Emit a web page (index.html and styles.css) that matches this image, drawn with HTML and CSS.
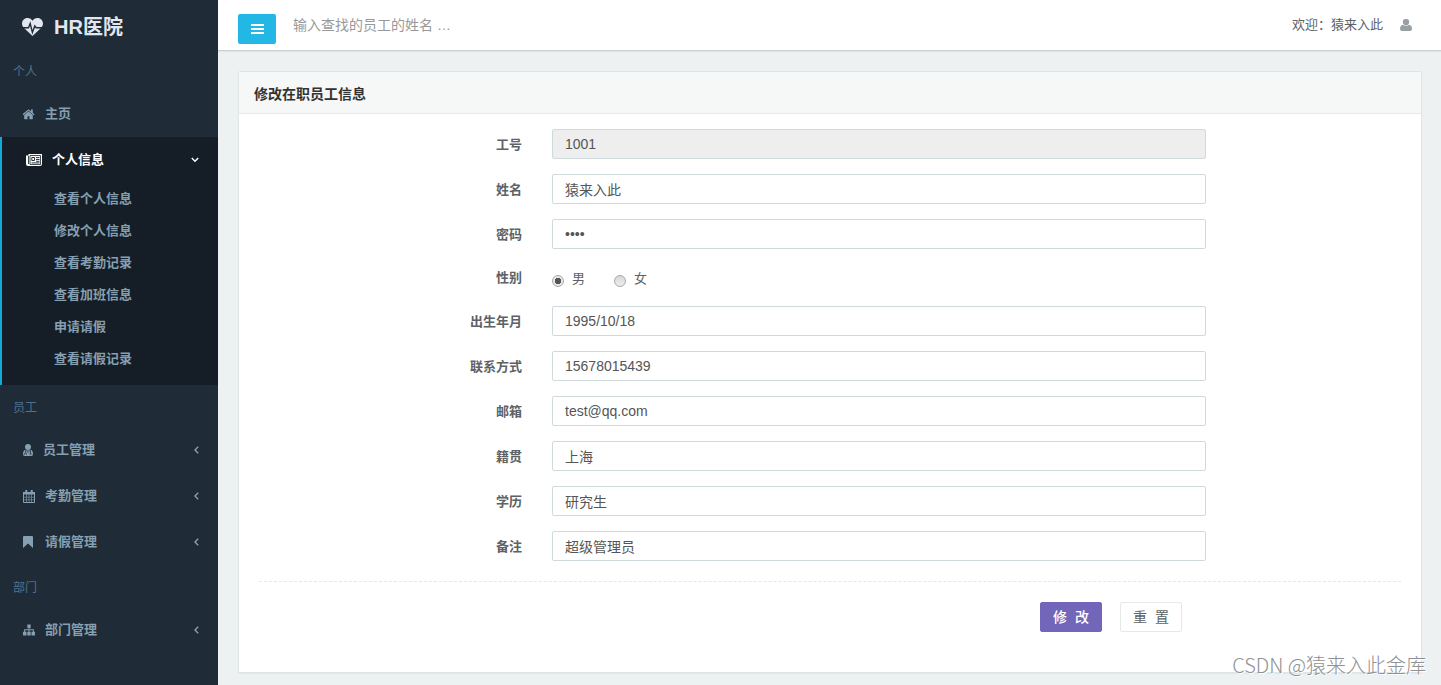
FILE: index.html
```html
<!DOCTYPE html>
<html lang="zh-CN">
<head>
<meta charset="utf-8">
<title>HR医院</title>
<link rel="stylesheet" href="styles.css">
</head>
<body>
<div class="app">
  <aside class="sidebar">
    <a class="brand" href="#">
      <svg class="brand-icon" viewBox="0 0 21 18"><path fill="currentColor" d="M10.500 18 2 10C-2 6 .5 0 5.500 0c2.300 0 4 1.300 5 2.800C11.500 1.300 13.200 0 15.500 0 20.500 0 23 6 19 10z"/><path class="pulse" d="M1 9.800h5.500l1.700-4.200 2.200 8.800 2.400-6.400 1.400 1.800H20"/></svg>
      HR医院
    </a>
    <nav>
      <h2 class="nav-title">个人</h2>
      <a class="nav-link" href="#">
        <svg class="icon-home" viewBox="100 200 1600 1300"><path fill="currentColor" d="M1408 992v480q0 26-19 45t-45 19h-384v-384h-256v384h-384q-26 0-45-19t-19-45v-480q0-1 .5-3t.5-3l575-474 575 474q1 2 1 6zm223-69l-62 74q-8 9-21 11h-3q-13 0-21-7l-692-577-692 577q-12 8-24 7-13-2-21-11l-62-74q-8-10-7-23.500t11-21.500l719-599q32-26 76-26t76 26l244 204v-195q0-14 9-23t23-9h192q14 0 23 9t9 23v408l219 182q10 8 11 21.500t-7 23.500z"/></svg>
        <span>主页</span>
      </a>
      <div class="nav-group">
        <a class="nav-link nav-current" href="#">
          <svg class="icon-news" viewBox="0 0 16 12"><path fill="currentColor" d="M2.500 0H16v10q0 2-2 2H2q-2 0-2-2V1.500h2.500z"/><path fill="none" stroke="#151e26" stroke-width=".8" d="M2.500 2v8M4 1.500h10.500v9H4z"/><path fill="none" stroke="#151e26" stroke-width=".9" d="M5.800 3.500h2.700v3H5.800zM10 3.600h3.500M10 5.500h3.500M10 7.300h3.500M5.500 8.900h8"/></svg>
          <span>个人信息</span>
          <svg class="chevron chevron-down" viewBox="0 0 8 6"><path d="m.8.900 3.200 3.300L7.200.900"/></svg>
        </a>
        <ul class="subnav">
          <li><a href="#">查看个人信息</a></li>
          <li><a href="#">修改个人信息</a></li>
          <li><a href="#">查看考勤记录</a></li>
          <li><a href="#">查看加班信息</a></li>
          <li><a href="#">申请请假</a></li>
          <li><a href="#">查看请假记录</a></li>
        </ul>
      </div>
      <h2 class="nav-title">员工</h2>
      <a class="nav-link" href="#">
        <svg class="icon-doctor" viewBox="0 0 10 12"><circle cx="5" cy="3" r="3" fill="currentColor"/><path fill="currentColor" d="M2.300 5.800q2.700 1.600 5.400 0Q10 6.500 10 10q0 2-1.500 2h-7Q0 12 0 10 0 6.500 2.300 5.800z"/><path class="cut" d="M2.500 6.200v2.500M1.500 10.800v-.8q0-1 1-1t1 1v.8M3.300 6.500 5 8.500l1.700-2M7.500 6.200v2.800"/><circle class="cut" cx="7.500" cy="9.800" r=".7"/></svg>
        <span>员工管理</span>
        <svg class="chevron" viewBox="0 0 5 8"><path d="M4.200.800 1 4l3.200 3.200"/></svg>
      </a>
      <a class="nav-link" href="#">
        <svg class="icon-calendar" viewBox="0 0 12 13"><path fill="none" stroke="currentColor" d="M.500 2.500h11v10H.500z"/><path fill="currentColor" d="M0 2h12v2.500H0zM2.300 0h2v3h-2zM7.700 0h2v3h-2z"/><path class="grid" d="M3.500 4v9M6 4v9M8.500 4v9M0 7.200h12M0 9.800h12"/></svg>
        <span>考勤管理</span>
        <svg class="chevron" viewBox="0 0 5 8"><path d="M4.200.800 1 4l3.200 3.200"/></svg>
      </a>
      <a class="nav-link" href="#">
        <svg class="icon-bookmark" viewBox="0 0 10 12"><path fill="currentColor" d="M1 0h8q1 0 1 1v11L5 7.600 0 12V1q0-1 1-1z"/></svg>
        <span>请假管理</span>
        <svg class="chevron" viewBox="0 0 5 8"><path d="M4.200.800 1 4l3.200 3.200"/></svg>
      </a>
      <h2 class="nav-title">部门</h2>
      <a class="nav-link" href="#">
        <svg class="icon-sitemap" viewBox="0 0 13 12"><path fill="currentColor" d="M4.700 0h3.600v3.700H7v1.600h4.800V8H13v4H9.200V8h1.500V6.300H7V8h1.300v4H4.700V8H6V6.300H2.300V8h1.500v4H0V8h1.200V5.300H6V3.700H4.700z"/></svg>
        <span>部门管理</span>
        <svg class="chevron" viewBox="0 0 5 8"><path d="M4.200.800 1 4l3.200 3.200"/></svg>
      </a>
    </nav>
  </aside>

  <div class="page">
    <header class="topbar">
      <button class="menu-button" type="button" aria-label="菜单">
        <svg viewBox="0 0 13 12"><path fill="currentColor" d="M0 1h13v2H0zM0 5h13v2H0zM0 9h13v2H0z"/></svg>
      </button>
      <input class="search" type="text" aria-label="查找员工" placeholder="输入查找的员工的姓名 …">
      <span class="welcome">欢迎：猿来入此</span>
      <svg class="icon-user" viewBox="0 0 12 12"><path fill="currentColor" d="M6 0a3.100 3.100 0 0 1 3.200 3.200C9.200 5 7.800 6.400 6 6.400S2.800 5 2.800 3.200A3.100 3.100 0 0 1 6 0zM2.900 5.700q3.100 2.500 6.200 0Q12 6.300 12 10q0 2-1.900 2H1.900Q0 12 0 10 0 6.300 2.900 5.700z"/></svg>
    </header>

    <main class="content">
      <section class="panel">
        <h1 class="panel-title">修改在职员工信息</h1>
        <form class="form">
          <div class="row"><label for="f-id">工号</label><input class="field" id="f-id" type="text" value="1001" readonly></div>
          <div class="row"><label for="f-name">姓名</label><input class="field" id="f-name" type="text" value="猿来入此"></div>
          <div class="row"><label for="f-pass">密码</label><input class="field" id="f-pass" type="password" value="1234"></div>
          <div class="row row-radio" role="radiogroup" aria-labelledby="f-sex">
            <span class="label" id="f-sex">性别</span>
            <div class="radios">
              <label class="radio"><input type="radio" name="sex" checked>男</label>
              <label class="radio"><input type="radio" name="sex">女</label>
            </div>
          </div>
          <div class="row"><label for="f-birth">出生年月</label><input class="field" id="f-birth" type="text" value="1995/10/18"></div>
          <div class="row"><label for="f-tel">联系方式</label><input class="field" id="f-tel" type="text" value="15678015439"></div>
          <div class="row"><label for="f-mail">邮箱</label><input class="field" id="f-mail" type="text" value="test@qq.com"></div>
          <div class="row"><label for="f-home">籍贯</label><input class="field" id="f-home" type="text" value="上海"></div>
          <div class="row"><label for="f-edu">学历</label><input class="field" id="f-edu" type="text" value="研究生"></div>
          <div class="row"><label for="f-note">备注</label><input class="field" id="f-note" type="text" value="超级管理员"></div>
          <hr class="divider">
          <div class="row">
            <div class="actions">
              <button class="button button-primary" type="submit">修&nbsp; 改</button>
              <button class="button" type="reset">重&nbsp; 置</button>
            </div>
          </div>
        </form>
      </section>
    </main>
  </div>
  <div class="watermark">CSDN @猿来入此金库</div>
</div>
</body>
</html>
```
FILE: styles.css
```css
* { box-sizing: border-box; }

body {
  margin: 0;
  background: #edf1f2;
  color: #5c6266;
  font-family: "Liberation Sans", "Noto Sans CJK SC", sans-serif;
  font-size: 13px;
  line-height: 18px;
}

a { color: inherit; text-decoration: none; }
button, input { font: inherit; color: inherit; }

.app { position: relative; display: flex; min-height: 100vh; }

/* Sidebar */
.sidebar { flex: 0 0 218px; background: #1f2b36; color: #869fb1; }

.brand {
  display: flex;
  align-items: center;
  gap: 11px;
  height: 49px;
  padding: 5px 22px 0;
  color: #e1e6ef;
  font-size: 20px;
  font-weight: bold;
}
.brand-icon { width: 21px; height: 18px; }
.pulse { fill: none; stroke: #1f2b36; stroke-width: 1.400; }

.nav-title {
  display: flex;
  align-items: center;
  height: 42px;
  margin: 0;
  padding: 4px 13px 0;
  color: #4f7290;
  font-size: 12px;
  font-weight: normal;
}

.nav-link {
  display: flex;
  align-items: center;
  gap: 10px;
  height: 46px;
  padding: 0 19px 0 23px;
  font-weight: bold;
}
.nav-link svg { flex: none; }
.nav-link .chevron { width: 5px; height: 8px; margin-left: auto; }
.nav-link .chevron-down { width: 8px; height: 6px; }
.chevron path { fill: none; stroke: currentColor; stroke-width: 1.400; }

.icon-home, .icon-sitemap { width: 12px; height: 12px; }
.icon-news { width: 16px; height: 12px; }
.icon-doctor { width: 10px; height: 12px; }
.icon-calendar { width: 12px; height: 13px; }
.icon-bookmark { width: 10px; height: 12px; margin-right: 2px; }
.cut { fill: none; stroke: #1f2b36; stroke-width: .700; }
.grid { fill: none; stroke: currentColor; stroke-width: .600; }

.nav-group { padding-bottom: 10px; border-left: 2px solid #13a9d8; background: #151e26; }
.nav-group .nav-current { padding-left: 24px; color: #fff; }
.subnav { margin: 0; padding: 0; list-style: none; font-weight: bold; }
.subnav a { display: block; padding: 7px 0 7px 52px; }

/* Top bar */
.page { display: flex; flex: 1; flex-direction: column; min-width: 0; }

.topbar {
  display: flex;
  align-items: center;
  height: 51px;
  padding: 0 29px 0 20px;
  border-bottom: 1px solid #cdd1d4;
  background: #fff;
  box-shadow: 0 1px 1px rgba(0, 0, 0, .05);
}
.menu-button {
  display: flex;
  align-items: center;
  justify-content: center;
  width: 38px;
  height: 30px;
  margin-top: 8px;
  border: 0;
  border-radius: 2px;
  background: #23b7e5;
  color: #fff;
}
.menu-button svg { flex: none; width: 13px; height: 12px; }
.search {
  flex: 1;
  min-width: 0;
  height: 34px;
  padding: 0 17px;
  border: 0;
  background: transparent;
  font-size: 14px;
}
.search::placeholder { color: #999; }
.welcome { margin-right: 17px; }
.icon-user { width: 12px; height: 12px; color: #98a0a4; }

/* Panel */
.content { padding: 20px 19px 12px 20px; }
.panel {
  border: 1px solid #dee5e7;
  border-radius: 2px;
  background: #fff;
  box-shadow: 0 1px 1px rgba(0, 0, 0, .05);
}
.panel-title {
  margin: 0;
  padding: 13px 15px 10px;
  border-bottom: 1px solid #e4e9ea;
  background: #f6f8f8;
  color: #333;
  font-size: 14px;
  font-weight: bold;
}

.form { display: flex; flex-direction: column; gap: 15px; padding: 15px 20px 40px; }
.row {
  display: grid;
  grid-template-columns: 263fr 654fr 165fr;
  column-gap: 30px;
  align-items: center;
}
.row > label, .label { padding-top: 1px; font-weight: bold; text-align: right; }
.field {
  width: 100%;
  height: 30px;
  padding: 0 12px;
  border: 1px solid #cfdadd;
  border-radius: 2px;
  background: #fff;
  color: #555;
  font-size: 14px;
}
.field[readonly] { background: #eee; }

.row-radio { height: 27px; }
.radios { display: flex; gap: 29px; padding-top: 2px; }
.radio { display: flex; align-items: center; gap: 8px; }
.radio input {
  appearance: none;
  width: 12px;
  height: 12px;
  margin: 4px 0 0;
  border: 1px solid #a8a8a8;
  border-radius: 50%;
  background: linear-gradient(#d8d8d8, #eee);
}
.radio input:checked { background: radial-gradient(circle, #555 0 3px, #e8e8e8 3px); }

.divider {
  width: 100%;
  margin: 5px 0;
  border: 0;
  border-top: 1px dashed #e4e8ea;
}

.actions {
  display: flex;
  grid-column: 2;
  justify-content: flex-end;
  gap: 18px;
  padding-right: 24px;
}
.button {
  width: 62px;
  height: 30px;
  padding: 0;
  border: 1px solid #e6e8ea;
  border-radius: 2px;
  background: #fff;
  font-size: 14px;
  white-space: nowrap;
}
.button-primary { border-color: #7266ba; background: #7266ba; color: #fff; font-weight: 500; }

.watermark {
  position: absolute;
  right: 15px;
  bottom: 6px;
  color: #8f9193;
  font-family: "Noto Sans CJK SC", sans-serif;
  font-size: 20px;
  font-weight: 300;
  line-height: 28px;
  text-shadow: 1px 1px 0 #fff;
}
```
